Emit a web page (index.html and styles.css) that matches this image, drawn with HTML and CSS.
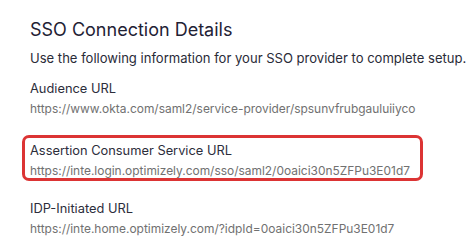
FILE: index.html
```html
<!DOCTYPE html>
<html lang="en">
<head>
<meta charset="utf-8">
<link rel="stylesheet" href="styles.css">
<title>SSO Connection Details</title>
</head>
<body>
<main class="panel">
  <h1 class="title">SSO Connection Details</h1>
  <p class="intro">Use the following information for your SSO provider to complete setup.</p>
  <section class="group group-first">
    <div class="label">Audience URL</div>
    <div class="value">https://www.okta.com/saml2/service-provider/spsunvfrubgauluiiyco</div>
  </section>
  <section class="group group-highlight">
    <div class="label">Assertion Consumer Service URL</div>
    <div class="value">https://inte.login.optimizely.com/sso/saml2/0oaici30n5ZFPu3E01d7</div>
  </section>
  <section class="group">
    <div class="label">IDP-Initiated URL</div>
    <div class="value">https://inte.home.optimizely.com/?idpId=0oaici30n5ZFPu3E01d7</div>
  </section>
</main>
</body>
</html>
```
FILE: styles.css
```css
html, body {
  margin: 0;
  padding: 0;
  background: #ffffff;
}
body {
  font-family: Inter, "Noto Sans", "Liberation Sans", sans-serif;
}
.panel {
  padding: 18px 0 0 30px;
}
.title {
  margin: 0;
  font-size: 18px;
  line-height: 24px;
  font-weight: 400;
  color: #1f2235;
}
.intro {
  margin: 6px 0 0;
  font-size: 13.05px;
  line-height: 20px;
  color: #2a2b38;
}
.group {
  position: relative;
  margin-top: 18px;
}
.group-first {
  margin-top: 11px;
}
.group-highlight {
  margin-top: 22px;
}
.group-highlight::after {
  content: "";
  position: absolute;
  left: -8px;
  top: -6px;
  width: 401px;
  height: 46px;
  box-sizing: border-box;
  border: 3px solid #dc3434;
  border-radius: 7px;
}
.label {
  font-size: 12.85px;
  line-height: 20px;
  color: #2c2d3b;
}
.value {
  font-size: 11.95px;
  line-height: 20px;
  color: #717171;
}
```
